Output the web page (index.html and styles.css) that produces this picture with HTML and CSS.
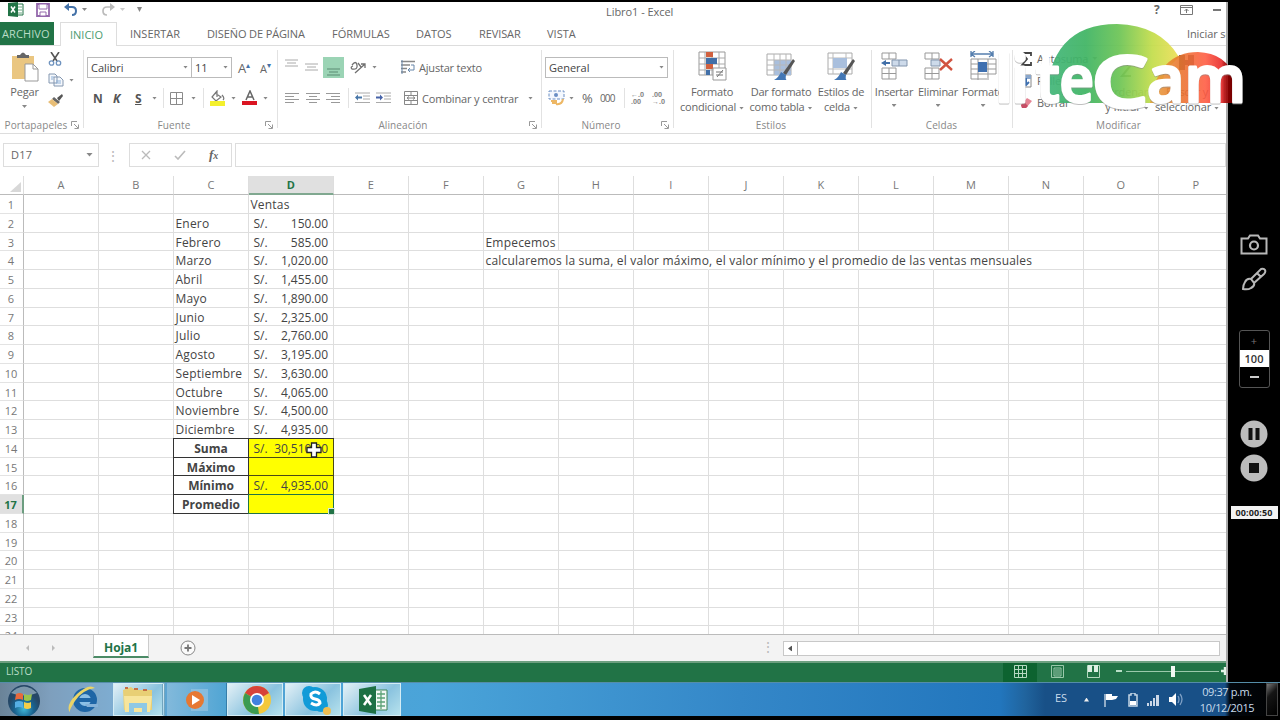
FILE: index.html
```html
<!DOCTYPE html>
<html lang="es">
<head>
<meta charset="utf-8">
<title>Libro1 - Excel</title>
<link rel="stylesheet" href="styles.css">
</head>
<body>
<svg width="0" height="0" class="defs">
  <defs>
    <symbol id="lines-l" viewBox="0 0 14 13"><path d="M0 1.5h14M0 4.5h9M0 7.5h14M0 10.5h9" stroke="#999" stroke-width="1.2"/></symbol>
    <symbol id="lines-c" viewBox="0 0 14 13"><path d="M0 1.5h14M3 4.5h8M0 7.5h14M3 10.5h8" stroke="#999" stroke-width="1.2"/></symbol>
    <symbol id="lines-r" viewBox="0 0 14 13"><path d="M0 1.5h14M5 4.5h9M0 7.5h14M5 10.5h9" stroke="#999" stroke-width="1.2"/></symbol>
    <symbol id="launch" viewBox="0 0 8 8"><path d="M.5 5V.5H6M3 3l4 4M7.5 3.5v4h-4" fill="none" stroke="#999"/></symbol>
    <symbol id="brush" viewBox="0 0 30 30"><path d="M27 8l2 2-9 14-3-2z" fill="#555"/><path d="M8 29q5-3 7-8l5 3q-1 5 1 5z" fill="#4377b5"/></symbol>
  </defs>
</svg>
<div class="screen">
  <div class="upper">
    <main class="excel">
      <header class="titlebar">
        <div class="quick">
          <svg width="16" height="15" viewBox="0 0 16 15"><path d="M9 2h6v11H9z" fill="#fff" stroke="#217346"/><path d="M10 5h4M10 8h4M10 11h4" stroke="#6aa882"/><path d="M0 1l10-1v15L0 14z" fill="#217346"/><path d="M3 4.5l4 6M7 4.5l-4 6" stroke="#fff" stroke-width="1.5"/></svg>
          <svg width="14" height="14" viewBox="0 0 14 14"><path d="M1 1h12v12H1z" fill="#fff" stroke="#9468ac" stroke-width="1.8"/><path d="M3 1h8v5H3zM4 9h6v4H4z" fill="#fff" stroke="#9468ac"/></svg>
          <svg width="14" height="13" viewBox="0 0 14 13"><path d="M2 4h6q4 0 4 4t-4 4" fill="none" stroke="#4472a8" stroke-width="2"/><path d="M0 4l5-4v8z" fill="#4472a8"/></svg>
          <i class="dd"></i>
          <svg width="14" height="13" viewBox="0 0 14 13"><path d="M12 4H6Q2 4 2 8t4 4" fill="none" stroke="#bbb" stroke-width="1.7"/><path d="M14 4L9 0v8z" fill="#bbb"/></svg>
          <i class="dd pale"></i>
          <i class="dd more"></i>
        </div>
        <div class="doc">Libro1 - Excel</div>
        <div class="winbtns">
          <b>?</b>
          <svg width="13" height="10" viewBox="0 0 13 10"><path d="M.5.5h12v9H.5zM.5 2.5h12M6.5 8V4M4.5 6l2-2 2 2" fill="none" stroke="#777"/></svg>
          <i class="min"></i>
        </div>
      </header>
      <nav class="tabs">
        <span class="file">ARCHIVO</span><span class="on">INICIO</span><span class="t3">INSERTAR</span><span class="t4">DISEÑO DE PÁGINA</span><span class="t5">FÓRMULAS</span><span class="t6">DATOS</span><span class="t7">REVISAR</span><span class="t8">VISTA</span><span class="login">Iniciar sesión</span>
      </nav>
      <section class="ribbon">
        <div class="group clip">
          <div class="cliprow">
            <div class="paste">
              <svg width="28" height="30" viewBox="0 0 28 30"><path d="M1 4h22v23H1z" fill="#eac681"/><path d="M6 6V3h3q3-5 6 0h3v3z" fill="#666"/><path d="M14 12h8l5 5v12H14z" fill="#fff" stroke="#999"/><path d="M22 12v5h5" fill="none" stroke="#999"/></svg>
              <span>Pegar</span><i class="dd"></i>
            </div>
            <div class="clipicons">
              <svg width="14" height="14" viewBox="0 0 14 14"><path d="M3 0l6 9M11 0L5 9" stroke="#555" stroke-width="1.6"/><circle cx="3.5" cy="11" r="2.2" fill="none" stroke="#6f93bf" stroke-width="1.3"/><circle cx="10.5" cy="11" r="2.2" fill="none" stroke="#6f93bf" stroke-width="1.3"/></svg>
              <div class="copy"><svg width="16" height="14" viewBox="0 0 16 14"><path d="M1 1h6l2 2v7H1zM6 4h6l3 3v6H6z" fill="#f5f8fc" stroke="#8497b0"/><path d="M3 4h3M3 6h2M8 8h5M8 10h5" stroke="#8db0d8"/></svg><i class="dd"></i></div>
              <svg width="15" height="13" viewBox="0 0 15 13"><path d="M9 4l5-4 1 2-4 5z" fill="#555"/><path d="M6 3l6 5-2 2-6-5z" fill="#666"/><path d="M4 5l6 5-4 3-6-5z" fill="#e8be77"/></svg>
            </div>
          </div>
          <div class="label"><span>Portapapeles</span><svg width="8" height="8"><use href="#launch"/></svg></div>
        </div>
        <div class="group font">
          <div class="r1">
            <div class="combo wide">Calibri<i class="dd"></i></div><div class="combo size">11<i class="dd"></i></div>
            <span class="grow">A<sup>▴</sup></span><span class="grow small">A<sup>▾</sup></span>
          </div>
          <div class="r2">
            <b>N</b><b><em>K</em></b><b><u>S</u></b><i class="dd"></i><i class="vr"></i>
            <svg width="13" height="13" viewBox="0 0 13 13"><path d="M.5.5h12v12H.5zM6.5 0v13M0 6.5h13" fill="none" stroke="#8a8a8a"/></svg><i class="dd"></i><i class="vr"></i>
            <svg width="16" height="16" viewBox="0 0 16 16"><path d="M5 3l6 4-5 4-4-4 5-6v6M12 5q3 3 1 5" fill="none" stroke="#777" stroke-width="1.2"/><path d="M0 11h15v5H0z" fill="#f4f02c"/></svg><i class="dd"></i>
            <svg width="16" height="16" viewBox="0 0 16 16"><path d="M4 10l4-9 4 9M5.5 7h5" fill="none" stroke="#666" stroke-width="1.5"/><path d="M0 11h15v4H0z" fill="#db1522"/></svg><i class="dd"></i>
          </div>
          <div class="label"><span>Fuente</span><svg width="8" height="8"><use href="#launch"/></svg></div>
        </div>
        <div class="group align">
          <div class="r1">
            <svg width="13" height="9" viewBox="0 0 13 9"><path d="M0 1h13M2 4h9M0 7h13" stroke="#aaa"/></svg>
            <svg width="13" height="9" viewBox="0 0 13 9"><path d="M0 1h13M2 4h9M0 7h13" stroke="#aaa"/></svg>
            <div class="green"><svg width="13" height="9" viewBox="0 0 13 9"><path d="M0 2h13M2 5h9M0 8h13" stroke="#5b8b72"/></svg></div>
            <svg width="16" height="14" viewBox="0 0 16 14"><path d="M2 5q4-5 5 0T2 9q-2-2 1-3M5 13L15 4M11 4h4v4M8 3l3 4" fill="none" stroke="#707070" stroke-width="1.3"/></svg><i class="dd"></i>
            <svg width="15" height="15" viewBox="0 0 15 15"><path d="M0 1.5h14M0 5h9M0 8.5h6M0 12h5" stroke="#888" stroke-width="1.5"/><path d="M1 14V0M10 5h3v5H7M9 8l-2 2 2 2" fill="none" stroke="#6686aa"/></svg><span class="wraptxt">Ajustar texto</span>
          </div>
          <div class="r2">
            <svg width="14" height="13"><use href="#lines-l"/></svg><svg width="14" height="13"><use href="#lines-c"/></svg><svg width="14" height="13"><use href="#lines-r"/></svg><i class="vr"></i>
            <svg width="15" height="12" viewBox="0 0 15 12"><path d="M0 1h15M8 4h7M8 7h7M0 10.5h15" stroke="#aaa"/><path d="M0 5.5l3-3v2h4v2H3v2z" fill="#4776a8"/></svg>
            <svg width="15" height="12" viewBox="0 0 15 12"><path d="M0 1h15M8 4h7M8 7h7M0 10.5h15" stroke="#aaa"/><path d="M7 5.5l-3-3v2H0v2h4v2z" fill="#4763a8"/></svg>
            <svg width="15" height="14" viewBox="0 0 15 14"><path d="M.5.5h13v13H.5zM0 4.5h14M0 9.5h14M7 0v4M7 10v4M3 7h8M5 5.5L3 7l2 1.5M9 5.5L11 7 9 8.5" fill="none" stroke="#888"/></svg><span>Combinar y centrar</span><i class="dd"></i>
          </div>
          <div class="label"><span>Alineación</span><svg width="8" height="8"><use href="#launch"/></svg></div>
        </div>
        <div class="group number">
          <div class="r1"><div class="combo">General<i class="dd"></i></div></div>
          <div class="r2">
            <svg width="17" height="16" viewBox="0 0 17 16"><path d="M1 1h15v8H1z" fill="#f4f8fe" stroke="#6a8ec4" stroke-dasharray="3 1.5"/><circle cx="8" cy="5" r="2" fill="#6a8ec4"/><path d="M3 11h5v2H4M8 14q6 1 7-5" fill="none" stroke="#edb764" stroke-width="2"/></svg><i class="dd"></i>
            <span class="pct">%</span><span class="mil">000</span><i class="vr"></i><span class="dec">←.0<br>.00</span><span class="dec">.00<br>→.0</span>
          </div>
          <div class="label"><span>Número</span><svg width="8" height="8"><use href="#launch"/></svg></div>
        </div>
        <div class="group styles">
          <div class="bigs">
            <div class="big"><svg width="30" height="30" viewBox="0 0 30 30"><path d="M2 1h26v23H2z" fill="#fff" stroke="#999"/><path d="M2 7h26M2 13h26M2 19h26M8 1v23M15 1v23M22 1v23" stroke="#aaa"/><path d="M9 1h7v5H9zM9 13h7v5H9z" fill="#d1613f"/><path d="M9 7h11v6H9zM9 19h4v5H9z" fill="#416fa8"/><path d="M16 17h13v12H16z" fill="#fff" stroke="#999"/><path d="M20 26l6-7M19 21h7M19 24h7" stroke="#777"/></svg><span>Formato<br>condicional<i class="dd"></i></span></div>
            <div class="big"><svg width="30" height="30" viewBox="0 0 30 30"><path d="M1 3h24v21H1z" fill="#fff" stroke="#aaa"/><path d="M8 9h17v15H8z" fill="#a9bfdd"/><path d="M1 9h24M1 14h24M1 19h24M8 3v21M14 3v21M20 3v21" stroke="#b7b7b7"/><use href="#brush"/></svg><span>Dar formato<br>como tabla<i class="dd"></i></span></div>
            <div class="big"><svg width="30" height="30" viewBox="0 0 30 30"><path d="M2 2h24v21H2z" fill="#fff" stroke="#aaa"/><path d="M2 7h24M2 18h24M7 2v21M20 2v21" stroke="#bbb"/><path d="M7 7h14v10H7z" fill="#a9bfdd"/><use href="#brush"/></svg><span>Estilos de<br>celda<i class="dd"></i></span></div>
          </div>
          <div class="label"><span>Estilos</span></div>
        </div>
        <div class="group cells">
          <div class="bigs">
            <div class="big"><svg width="28" height="30" viewBox="0 0 28 30"><path d="M2 2h14v6H2zM9 2v6M2 17h14v11H2zM9 17v11M2 22.5h14" fill="#fff" stroke="#999"/><path d="M12 9h15v6H12zM19 9v6" fill="#cddaea" stroke="#8295ad"/><path d="M1 12l5-3v2h4v2H6v2z" fill="#416fa8"/></svg><span>Insertar</span><i class="dd"></i></div>
            <div class="big"><svg width="30" height="30" viewBox="0 0 30 30"><path d="M2 2h14v6H2zM9 2v6M2 17h14v11H2zM9 17v11M2 22.5h14" fill="#fff" stroke="#999"/><path d="M8 9h9v6H8z" fill="#cddaea" stroke="#8295ad"/><path d="M17 8l12 11M29 8L17 19" stroke="#d15340" stroke-width="2.4"/></svg><span>Eliminar</span><i class="dd"></i></div>
            <div class="big"><svg width="30" height="30" viewBox="0 0 30 30"><path d="M3 3h22M3 0v6M25 0v6M7 0L3 3l4 3M21 0l4 3-4 3" fill="none" stroke="#567fae" stroke-width="1.3"/><path d="M3 8h25v15H3zM10 8v21M20 8v21M3 13h25M3 18h25M3 23v5h16" fill="none" stroke="#999"/><path d="M10 11h9v10h-9z" fill="#3f70b0"/></svg><span>Formato</span><i class="dd"></i></div>
          </div>
          <div class="label"><span>Celdas</span></div>
        </div>
        <div class="group edit">
          <div class="editrow">
            <div class="editlist">
              <div><svg width="13" height="14" viewBox="0 0 13 14"><path d="M11 4V1H2l5 6-5 6h9v-3" fill="none" stroke="#444" stroke-width="1.8"/></svg><span>Autosuma</span><i class="dd"></i></div>
              <div><svg width="13" height="14" viewBox="0 0 13 14"><path d="M1 1h10v12H1z" fill="#fff" stroke="#888"/><path d="M1 1h10v4H1z" fill="#8aa7cc"/><path d="M6 4v6M3 8l3 3 3-3" fill="none" stroke="#3f70b0" stroke-width="2"/></svg><span>Rellenar</span></div>
              <div><svg width="13" height="14" viewBox="0 0 13 14"><path d="M1 9l6-7 5 3-6 7H2z" fill="#e48494"/><path d="M1 9l3-3 4 4-2 2H2z" fill="#c74d65"/></svg><span>Borrar</span></div>
            </div>
            <div class="big"><svg width="30" height="30" viewBox="0 0 30 30"><path d="M10 14h9l-9 11h9" fill="none" stroke="#52734e" stroke-width="2"/></svg><span>Ordenar<br>y filtrar<i class="dd"></i></span></div>
            <div class="big"><svg width="30" height="30" viewBox="0 0 30 30"><path d="M7 4h6v15H7zM16 4h6v15h-6zM12 9h5v5h-5z" fill="#555"/></svg><span>Buscar y<br>seleccionar<i class="dd"></i></span></div>
          </div>
          <div class="label"><span>Modificar</span></div>
        </div>
      </section>
      <section class="formula">
        <div class="namebox"><span>D17</span><i class="dd big-dd"></i></div>
        <div class="dots">⋮</div>
        <div class="fbtns">
          <svg width="10" height="10" viewBox="0 0 10 10"><path d="M1 1l8 8M9 1L1 9" stroke="#bbb" stroke-width="1.3"/></svg>
          <svg width="12" height="10" viewBox="0 0 12 10"><path d="M1 6l3 3 7-8" fill="none" stroke="#bbb" stroke-width="1.6"/></svg>
          <span class="fx">f<small>x</small></span>
        </div>
        <div class="finput"></div>
      </section>
      <section class="sheet" id="sheet"></section>
      <section class="sheettabs">
        <i class="arr l"></i><i class="arr r"></i>
        <div class="tab">Hoja1</div>
        <svg class="plus" width="16" height="16" viewBox="0 0 16 16"><circle cx="8" cy="8" r="7" fill="#fafafa" stroke="#888"/><path d="M8 4.5v7M4.5 8h7" stroke="#777" stroke-width="1.8"/></svg>
        <div class="dots tdots">⋮</div>
        <div class="scroll"><i></i></div>
      </section>
      <footer class="status">
        <span>LISTO</span>
        <div class="view on"><svg width="13" height="13" viewBox="0 0 13 13"><path d="M.5.5h12v12H.5zM4.5 0v13M8.5 0v13M0 4.5h13M0 8.5h13" fill="none" stroke="#b4d8c0"/></svg></div>
        <div class="view"><svg width="13" height="13" viewBox="0 0 13 13"><path d="M.5.5h12v12H.5zM3 3h7v8H3zM4 5h5M4 7h5M4 9h5" fill="none" stroke="#9ac9ab"/></svg></div>
        <div class="view"><svg width="13" height="13" viewBox="0 0 13 13"><path d="M.5.5h12v12H.5z" fill="none" stroke="#b4d8c0"/><path d="M1 0h4v7H1zM7 0h4v7H7z" fill="#ddf0e3"/></svg></div>
        <i class="minus"></i><div class="zoom"><i></i></div><i class="zplus"></i>
      </footer>
    </main>
    <aside class="recorder">
      <svg class="cam" width="28" height="21" viewBox="0 0 28 21"><path d="M1.5 4.5H8l2-3h8l2 3h6.5v15h-25z" fill="none" stroke="#b8b8b8" stroke-width="2"/><circle cx="14" cy="11.5" r="4" fill="none" stroke="#b8b8b8" stroke-width="2.2"/></svg>
      <svg class="pen" width="26" height="24" viewBox="0 0 26 24"><path d="M10 12L20 2q3-1 4 1 1 2-1 4L13 16M10 12q-4-1-6 3-2 3-2 7 5 1 8-1 4-2 3-5zM10 12l3 4M16 6l4 4" fill="none" stroke="#b8b8b8" stroke-width="2"/></svg>
      <div class="stepper"><span>+</span><b>100</b><i></i></div>
      <svg class="pause" width="28" height="28" viewBox="0 0 28 28"><circle cx="14" cy="14" r="13.5" fill="#bcbcbc"/><path d="M8.5 8h4v12h-4zM15.5 8h4v12h-4z" fill="#111"/></svg>
      <svg class="stop" width="28" height="28" viewBox="0 0 28 28"><circle cx="14" cy="14" r="13.5" fill="#bcbcbc"/><path d="M9 9h10v10H9z" fill="#111"/></svg>
      <div class="timer">00:00:50</div>
    </aside>
  </div>
  <div class="taskbar">
    <div class="task start"><svg width="34" height="32" viewBox="0 0 34 32"><defs><radialGradient id="orb" cx=".5" cy=".75"><stop offset="0" stop-color="#3fb7d8"/><stop offset=".6" stop-color="#19628f"/><stop offset="1" stop-color="#254766"/></radialGradient></defs><circle cx="17" cy="17" r="16" fill="url(#orb)"/><path d="M4 9q13-13 26 0-13 5-26 0z" fill="#b8cdd8" opacity=".6"/><path d="M9 10q4-2 7 0v6q-4-2-8 0z" fill="#e8693c"/><path d="M17 10q4 2 8 0l-1 6q-4 2-7 0z" fill="#9bc44b"/><path d="M8 18q4-2 8 0v6q-4-2-8 0z" fill="#56aee4"/><path d="M17 18q4 2 7 0v6q-4 2-7 0z" fill="#f3ce4a"/></svg></div>
    <div class="task ie"><svg width="32" height="30" viewBox="0 0 32 30"><circle cx="18" cy="15" r="9" fill="#8cc0e6" stroke="#1f66a6" stroke-width="6"/><path d="M10 13h18v4H10z" fill="#1f66a6"/><path d="M18 19h13v3H20z" fill="#86b2d8"/><path d="M3 28Q-2 20 10 9T28 3Q15 5 8 16T3 28z" fill="#ead467"/></svg></div>
    <div class="task lit exp"><svg width="32" height="28" viewBox="0 0 32 28"><path d="M1 4l8-3 4 3h17v20H2z" fill="#e8cf75"/><path d="M2 10h28l-2 16H3z" fill="#f7e59c"/><path d="M7 17h18v9h-5v-4h-8v4H7z" fill="#8ec8e5"/><path d="M3 2h3M12 3h4M21 4h4" stroke="#c66e45" stroke-width="2"/></svg></div>
    <div class="task wmp"><svg width="28" height="28" viewBox="0 0 28 28"><path d="M8 3h17v22H8z" fill="#9cc8e3" opacity=".6"/><circle cx="12" cy="14" r="9" fill="#e67832"/><path d="M9 9l8 5-8 5z" fill="#fff"/></svg></div>
    <div class="task lit chrome"><svg width="28" height="28" viewBox="0 0 28 28"><circle cx="14" cy="14" r="14" fill="#f3c83c"/><path d="M14 14L2 7q4-7 12-7 8 0 12 7z" fill="#d6423a"/><path d="M2 7l12 7 2 14Q5 29 1 19-1 13 2 7z" fill="#3b9b52"/><circle cx="14" cy="14" r="7" fill="#fff"/><circle cx="14" cy="14" r="5.3" fill="#4281df"/></svg></div>
    <div class="task lit skype"><svg width="30" height="30" viewBox="0 0 30 30"><circle cx="14" cy="14" r="12" fill="#119bd8"/><circle cx="8" cy="8" r="7" fill="#119bd8"/><circle cx="20" cy="20" r="7" fill="#119bd8"/><path d="M19 9q-5-4-9 0-1 4 4 5t5 4q-3 4-9 0" fill="none" stroke="#fff" stroke-width="3"/><circle cx="26" cy="26" r="4" fill="#eebd52"/></svg></div>
    <div class="task lit xl"><svg width="30" height="28" viewBox="0 0 30 28"><path d="M16 4h12v20H16z" fill="#f2f8f4" stroke="#3d8559"/><path d="M18 8h8M18 12h8M18 16h8M18 20h8M22 5v18" stroke="#5ca177" stroke-width="1.3"/><path d="M0 3l17-3v28L0 25z" fill="#1d7044"/><path d="M5 9l7 10M12 9L5 19" stroke="#fff" stroke-width="2.5"/></svg></div>
    <div class="tray">
      <span class="lang">ES</span><i class="up"></i>
      <svg width="16" height="14" viewBox="0 0 16 14"><path d="M2 1v13" stroke="#bcd" stroke-width="1.5"/><path d="M3 1h6v2h6l-2 3-4 1H3z" fill="#fff"/></svg>
      <svg width="10" height="14" viewBox="0 0 10 14"><path d="M3 0h4v2h2v11H1V2h2z" fill="none" stroke="#c5d6e6" stroke-width="1.5"/><path d="M2 8h6v4H2z" fill="#fff"/></svg>
      <svg width="14" height="12" viewBox="0 0 14 12"><path d="M1 9h2v3H1zM4 7h2v5H4zM7 4h2v8H7zM10 1h3v11h-3z" fill="#cbd8e8"/></svg>
      <svg width="14" height="13" viewBox="0 0 14 13"><path d="M0 4h3l4-4v13L3 9H0z" fill="#fff"/><path d="M9 3q2 3 0 7M11 1q4 5 0 11" fill="none" stroke="#7fa0c5" stroke-width="1.3"/></svg>
      <div class="clock">09:37 p.m.<br>10/12/2015</div>
      <i class="desk"></i>
    </div>
  </div>
  <svg class="logo" width="260" height="96" viewBox="992 16 260 96">
    <defs>
      <linearGradient id="dome"><stop offset="0" stop-color="#43b67c"/><stop offset=".3" stop-color="#3fb463"/><stop offset=".55" stop-color="#6cc455"/><stop offset=".8" stop-color="#c3dd4b"/><stop offset="1" stop-color="#eddf58"/></linearGradient>
      <linearGradient id="red"><stop offset="0" stop-color="#e8a23c"/><stop offset=".35" stop-color="#e8742b"/><stop offset=".65" stop-color="#ff5a40"/><stop offset=".84" stop-color="#e82424"/><stop offset=".88" stop-color="#a00"/><stop offset="1" stop-color="#700"/></linearGradient>
    </defs>
    <path d="M1046 103Q1048 24 1117 24Q1160 25 1179 57L1166 70L1155 103z" fill="url(#dome)" opacity=".93"/>
    <path d="M1150 103Q1158 52 1198 52Q1226 53 1235 78V103z" fill="url(#red)" opacity=".88"/>
    <g class="word">
      <text x="995" y="102" textLength="34" lengthAdjust="spacing">li</text>
      <text x="1036" y="102" textLength="58" lengthAdjust="spacingAndGlyphs">te</text>
      <text x="1092" y="107" textLength="56" lengthAdjust="spacingAndGlyphs" class="cap">C</text>
      <text x="1147" y="102" textLength="99" lengthAdjust="spacingAndGlyphs">am</text>
    </g>
  </svg>
  <svg class="cursor" width="16" height="16" viewBox="0 0 16 16"><path d="M5.500 1h5v4.500H15v5h-4.500V15h-5v-4.500H1v-5h4.500z" fill="#fff" stroke="#222" stroke-width="1.300"/></svg>
</div>
<script src="sheet.js"></script>
</body>
</html>
```

FILE: styles.css
```css
* { box-sizing: border-box; }
body { margin: 0; background: #000; font-family: "Open Sans", "Noto Sans", sans-serif; font-size: 11px; color: #666; }
i { font-style: normal; display: block; }
svg { display: block; flex: none; }
.defs { position: absolute; }
.screen { position: relative; width: 1280px; height: 720px; overflow: hidden; padding-top: 2px; background: #000; }
.upper { display: flex; height: 680px; }
.excel { width: 1228px; height: 680px; background: #fff; border-right: 2px solid #aaa; overflow: hidden; display: flex; flex-direction: column; }
.dd { flex: none; width: 5px; height: 3px; background: #888; clip-path: polygon(0 0, 100% 0, 50% 100%); }
.pale { background: #ccc; }
.vr { width: 1px; height: 20px; background: #e2e2e2; }

.titlebar { height: 20px; display: grid; grid-template-columns: 600px 1fr 80px; flex: none; }
.quick { display: grid; grid-template-columns: 28px 28px 18px 19px 19px 17px 6px; padding-left: 8px; align-items: center; height: 15px; }
.more { height: 5px; }
.doc { padding-left: 6px; line-height: 19px; letter-spacing: -.05px; }
.winbtns { display: flex; gap: 20px; padding-left: 8px; height: 15px; align-items: center; }
.winbtns b { font-size: 12px; }
.min { width: 8px; height: 2px; background: #777; }

.tabs { flex: none; height: 24px; display: flex; line-height: 24px; border-bottom: 1px solid #ddd; white-space: nowrap; }
.tabs span { flex: none; }
.file { width: 54px; background: #217346; color: #b9dcc7; padding-left: 2px; height: 23px; letter-spacing: .1px; }
.on { color: #4b9b70; }
.tabs .on { width: 57px; margin-left: 6px; padding-left: 9px; border: 1px solid #ddd; border-bottom: 0; height: 24px; background: #fff; }
.t3 { width: 77px; padding-left: 13px; }
.t4 { width: 125px; padding-left: 13px; letter-spacing: -.12px; }
.t5 { width: 85px; padding-left: 13px; }
.t6 { width: 62px; padding-left: 12px; }
.t7 { width: 69px; padding-left: 13px; letter-spacing: -.1px; }
.t8 { width: 652px; padding-left: 12px; }
.login { letter-spacing: -.1px; }

.ribbon { flex: none; height: 88px; display: flex; border-bottom: 1px solid #ddd; }
.group { flex: none; display: grid; grid-template-rows: 72px 14px; position: relative; letter-spacing: -.15px; white-space: nowrap; }
.group + .group::before { content: ""; position: absolute; left: 0; top: 4px; height: 78px; width: 1px; background: #e2e2e2; }
.group:has(.r1) { grid-template-rows: 42px 30px 14px; }
.label { font-size: 10px; line-height: 14px; color: #888; text-align: center; display: grid; grid-template-columns: 1fr 12px; align-items: center; letter-spacing: .1px; }
.r1, .r2 { display: grid; align-items: center; }
.r2 { padding-bottom: 16px; }
.combo { height: 21px; border: 1px solid #bbb; display: flex; align-items: center; justify-content: space-between; padding: 0 3px; color: #444; letter-spacing: 0; }
.clip { width: 83px; }
.clip .label { padding-left: 1px; }
.cliprow { display: flex; padding-top: 6px; }
.paste { width: 46px; display: flex; flex-direction: column; align-items: center; line-height: 20px; padding-left: 3px; }
.paste .dd { margin-top: 3px; }
.clipicons { display: flex; flex-direction: column; gap: 7px; padding-left: 2px; }
.copy { display: flex; gap: 5px; align-items: center; }
.font { width: 194px; }
.font .r1 { grid-template-columns: 104px 41px 22px 20px; padding-left: 4px; }
.font .wide { width: 105px; }
.font .size { width: 41px; }
.grow { font-size: 13px; padding-left: 6px; line-height: 16px; }
.grow sup { font-size: 8px; color: #4472a8; }
.grow.small { font-size: 11px; }
.font .r2 { grid-template-columns: 20px 22px 17px 11px 7px 21px 12px 7px 21px 11px 21px 10px; padding-left: 10px; font-size: 12px; color: #555; }
.align { width: 264px; }
.align .r1 { grid-template-columns: 20px 18px 27px 22px 29px 18px 1fr; padding-left: 8px; }
.align .r1 svg:nth-of-type(1) { margin-bottom: 8px; }
.green { width: 21px; height: 21px; background: #9bd4b5; padding: 10px 4px 0; }
.align .wraptxt { letter-spacing: -.2px; }
.align .r2 { grid-template-columns: 21px 20px 22px 7px 21px 28px 18px 106px 6px; padding-left: 8px; }
.number { width: 132px; }
.number .r1 { padding: 0 4px; }
.number .combo { width: 123px; }
.number .r2 { grid-template-columns: 21px 13px 18px 24px 7px 21px 20px; padding-left: 7px; }
.pct { font-size: 13px; }
.mil { font-size: 10px; letter-spacing: -.9px; }
.dec { font-size: 7px; line-height: 7px; font-weight: bold; color: #888; letter-spacing: 0; }
.styles { width: 198px; }
.bigs { display: grid; height: 72px; }
.styles .bigs { grid-template-columns: 76px 62px 58px; padding-left: 1px; }
.big { display: flex; flex-direction: column; align-items: center; padding-top: 5px; text-align: center; line-height: 15px; }
.big > span { padding-top: 3px; }
.styles .big > span { letter-spacing: -.22px; }
.big span .dd { display: inline-block; vertical-align: middle; margin-left: 3px; }
.big > .dd { margin-top: 5px; }
.styles .label { padding-left: 10px; }
.cells { width: 141px; }
.cells .bigs { grid-template-columns: 44px 44px 46px; padding-left: 1px; }
.cells .big > span { letter-spacing: -.25px; }
.cells .label { padding-left: 12px; }
.edit { width: 214px; }
.edit .label { padding-left: 11px; }
.editrow { display: grid; grid-template-columns: 92px 46px 74px; height: 72px; }
.editlist { padding: 5px 0 0 8px; display: flex; flex-direction: column; gap: 7px; }
.editlist div { display: flex; height: 15px; line-height: 15px; align-items: center; gap: 4px; }

.formula { flex: none; height: 42px; padding-top: 9px; display: grid; grid-template-columns: 96px 30px 103px 3px 1fr; padding-left: 3px; }
.formula > div { height: 24px; display: flex; align-items: center; }
.namebox, .fbtns, .finput { border: 1px solid #ddd; }
.formula .namebox { justify-content: space-between; padding: 0 5px 1px 7px; letter-spacing: .2px; }
.big-dd { width: 7px; height: 4px; }
.dots { color: #bbb; font-size: 14px; }
.formula .dots { justify-content: center; padding-right: 2px; }
.formula .fbtns { padding-left: 11px; padding-bottom: 1px; gap: 23px; }
.fx { font: italic bold 13px "Liberation Serif", serif; }
.fx small { font-size: 10px; }
.finput { grid-column: 5; }

.sheet { flex: none; height: 458px; overflow: hidden; color: #444; font-size: 12px; }
.line { display: flex; height: 18.75px; line-height: 20.5px; }
.line.head { height: 19px; line-height: 18px; }
.cell { flex: none; width: 75px; border-right: 1px solid #dedede; border-bottom: 1px solid #dedede; padding-left: 1.5px; white-space: nowrap; position: relative; height: 100%; letter-spacing: .2px; }
.cell.D { width: 85px; }
.rowno { flex: none; width: 24px; text-align: center; font-size: 11px; color: #777; border-right: 1px solid #bbb; border-bottom: 1px solid #e3e3e3; padding-right: 1px; }
.rowno.on { background: #e0e0e0; color: #217346; font-weight: bold; border-right: 2px solid #6c9d80; }
.corner { border-right-color: #ddd; border-bottom-color: #bbb; }
.corner i { width: 11px; height: 10px; margin: 6px 0 0 10px; background: #d8d8d8; clip-path: polygon(100% 0, 100% 100%, 0 100%); }
.head .cell { text-align: center; color: #777; padding: 0; border-bottom-color: #bbb; font-size: 11px; }
.head .cell.D { background: #e0e0e0; color: #217346; font-weight: bold; border-bottom: 2px solid #80a890; }
.open { border-right-color: transparent; }
.money { display: flex; justify-content: space-between; padding: 0 5px 0 4.5px; letter-spacing: -.05px; }
.total { font-weight: bold; text-align: center; padding: 0; border-color: #333; box-shadow: -1px 0 #333; letter-spacing: 0; }
.yellow { background: #ff0; border-color: #4b4b16; }
.top { box-shadow: 0 -1px #333; }
.total.top { box-shadow: -1px 0 #333, 0 -1px #333, -1px -1px #333; }
.sel::before { content: ""; position: absolute; inset: -1px; border: 1px solid #217346; }
.sel::after { content: ""; position: absolute; right: -2px; bottom: -2px; width: 5px; height: 5px; background: #217346; border: 1px solid #d8e8dd; }

.sheettabs { flex: none; height: 27px; background: #f3f3f3; border-top: 1px solid #bbb; display: grid; grid-template-columns: 26px 41px 56px 32px 580px 22px 437px; padding-left: 26px; }
.arr { width: 3px; height: 6px; background: #bbb; margin-top: 10px; clip-path: polygon(0 0, 100% 50%, 0 100%); }
.arr.l { clip-path: polygon(100% 0, 0 50%, 100% 100%); }
.tab { height: 23px; background: #fff; border: solid #ccc; border-width: 0 1px; border-bottom: 2px solid #4b8b66; color: #217346; font-weight: bold; text-align: center; line-height: 25px; font-size: 12px; letter-spacing: -.1px; }
.plus { margin: 5px 0 0 31px; width: 16px; }
.sheettabs .tdots { grid-column: 5; padding: 2px 0 0 580px; }
.scroll { grid-column: 7; height: 15px; border: 1px solid #c8c8c8; margin-top: 6px; background: #fff; }
.scroll i { width: 14px; height: 13px; border-right: 1px solid #aaa; }
.scroll i::before { content: ""; display: block; width: 4px; height: 6px; margin-left: 4px; background: #555; clip-path: polygon(100% 0, 0 50%, 100% 100%); transform: translateY(3.5px); }

.status { flex: none; height: 21px; background: #217346; border-top: 2px solid #6d9f80; color: #b9dcc7; font-size: 10px; line-height: 16px; display: grid; grid-template-columns: 997px 36px 36px 36px 5px 6px 97px 8px; padding: 0 0 3px 6px; align-items: center; letter-spacing: -.15px; }
.view { height: 16px; display: grid; place-items: center; }
.view.on { background: #0d6330; margin-right: 2px; box-shadow: 0 3px #0d6330; }
.minus { grid-column: 6; width: 6px; height: 2px; background: #b8dfc7; }
.zoom { height: 11px; margin-left: 4px; display: grid; place-items: center; background: linear-gradient(#9ac9ab, #9ac9ab) center / 100% 1px no-repeat; }
.zoom i { width: 4px; height: 11px; background: #f1f8f3; }
.zplus { width: 8px; height: 8px; margin-left: 2px; background: #e4f4e9; clip-path: polygon(0 35%, 35% 35%, 35% 0, 65% 0, 65% 100%, 35% 100%, 35% 65%, 0 65%); }

.recorder { width: 52px; display: flex; flex-direction: column; align-items: center; padding-top: 232px; }
.pen { margin-top: 12px; }
.stepper { margin-top: 39px; width: 31px; height: 58px; border: 1px solid #555; border-radius: 3px; display: grid; grid-template-rows: 19px 17px 20px; text-align: center; color: #777; align-items: center; }
.stepper b { background: #fff; color: #333; line-height: 17px; font-size: 11px; font-weight: 600; }
.stepper i { width: 9px; height: 2px; background: #ccc; justify-self: center; }
.pause { margin-top: 32px; }
.stop { margin-top: 6px; }
.timer { margin-top: 24px; width: 47px; height: 13px; background: #f3f3f3; color: #222; font-size: 9px; line-height: 13px; font-weight: bold; text-align: center; letter-spacing: .1px; }

.taskbar { height: 34px; display: grid; grid-template-columns: 56px 57px 54px 60px 58px 58px 60px 1fr; background: linear-gradient(90deg, #6a8398 0, #7e9fbd 50px, #7eacd0 110px, #55a2d2 180px, #4aa4d9 430px, #3487c8 740px, #2276bd 1000px, #20649e 1025px, #185087 1045px, #185087 1225px, #02070d 1230px, #000); border-top: 1px solid #558da8; }
.task { display: grid; place-items: center; overflow: hidden; }
.lit { background: linear-gradient(135deg, #e3f0f6, #8ac3df 60%, #b7e2ed); border: 1px solid #d4edf5; margin-right: 2px; }
.start { padding-right: 8px; }
.ie { padding-right: 4px; }
.wmp { background: linear-gradient(90deg, #82b9db, #50a5d4); border-right: 1px solid #357da9; }
.exp { border-right: 3px double #71a5be; }
.chrome { padding-left: 4px; }
.skype { padding-left: 5px; }
.xl { padding-left: 4px; }
.tray { display: flex; align-items: center; color: #c9dcec; padding-left: 652px; }
.tray .lang { width: 29px; padding-bottom: 4px; }
.up { width: 5px; height: 4px; background: #eee; clip-path: polygon(50% 0, 100% 100%, 0 100%); margin-right: 14px; }
.tray svg { margin-right: 8.5px; }
.clock { width: 58px; line-height: 16px; letter-spacing: -.4px; margin-left: 7px; text-align: center; white-space: nowrap; }
.desk { width: 12px; height: 33px; margin-left: 10px; background: linear-gradient(135deg, #777, #151515 35%, #000); border: 1px solid #444; }

.logo { position: absolute; left: 992px; top: 16px; }
.word { font: 600 65px "Open Sans", "Noto Sans", sans-serif; fill: #fff; stroke: #fff; stroke-width: 3px; stroke-linejoin: round; filter: drop-shadow(0 1px .7px #8888); }
.word .cap { font-size: 70px; stroke-width: 4px; }
.cursor { position: absolute; left: 306px; top: 442px; }
```

FILE: sheet.js
```js
const cols = "ABCDEFGHIJKLMNOP".split("");
const months = ["Enero", "Febrero", "Marzo", "Abril", "Mayo", "Junio", "Julio", "Agosto", "Septiembre", "Octubre", "Noviembre", "Diciembre"];
const totals = { 14: ["Suma", "30,510.00"], 15: ["Máximo", ""], 16: ["Mínimo", "4,935.00"], 17: ["Promedio", ""] };
const notes = { 3: "Empecemos", 4: "calcularemos la suma, el valor máximo, el valor mínimo y el promedio de las ventas mensuales" };

const money = (v) => (v ? `<span>S/.</span><span>${v}</span>` : "");

function cell(col, row) {
  let cls = `cell ${col}`;
  let text = "";
  const total = totals[row];
  if (col === "C") {
    if (row >= 2 && row <= 13) text = months[row - 2];
    if (total) { cls += " total"; text = total[0]; }
  }
  if (col === "D") {
    if (row === 1) text = "Ventas";
    if (row >= 2 && row <= 13) {
      cls += " money";
      text = money((150 + 435 * (row - 2)).toLocaleString("en-US") + ".00");
    }
    if (total) { cls += " money yellow"; text = money(total[1]); }
    if (row === 17) cls += " sel";
  }
  if (row === 14 && total && (col === "C" || col === "D")) cls += " top";
  if (col === "G" && notes[row]) text = notes[row];
  if (row === 4 && col >= "G" && col <= "M") cls += " open";
  return `<div class="${cls}">${text}</div>`;
}

let html = `<div class="line head"><div class="rowno corner"><i></i></div>${cols.map((c) => `<div class="cell ${c}">${c}</div>`).join("")}</div>`;
for (let r = 1; r <= 24; r++) {
  html += `<div class="line"><div class="rowno${r === 17 ? " on" : ""}">${r}</div>${cols.map((c) => cell(c, r)).join("")}</div>`;
}
document.getElementById("sheet").innerHTML = html;
```
